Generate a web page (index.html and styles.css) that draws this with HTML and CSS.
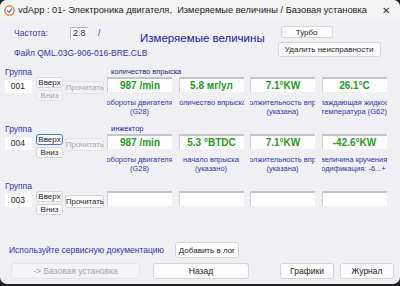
FILE: index.html
```html
<!DOCTYPE html>
<html lang="ru">
<head>
    <meta charset="UTF-8">
    <title>vdApp - Базовая установка</title>
    <link rel="stylesheet" href="styles.css">
</head>
<body>
    <div class="window">
        <div class="titlebar">
            <svg class="app-icon" width="11" height="11" viewBox="0 0 11 11">
                <circle cx="5.5" cy="5.5" r="4.6" fill="#fff" stroke="#e06a2a" stroke-width="1.3"/>
                <path d="M3.2 5.6 L5 7.3 L8 3.6" fill="none" stroke="#3a6fb0" stroke-width="1.3"/>
            </svg>
            <span class="title">vdApp : 01- Электроника двигателя,&nbsp; Измеряемые величины / Базовая установка</span>
            <span class="close">✕</span>
        </div>

        <div class="top">
            <div class="info">
                <div class="freq">
                    <span class="lbl">Частота:</span>
                    <span class="freq-box">2.8</span>
                    <span class="slash">/</span>
                </div>
                <div class="file">Файл QML.03G-906-016-BRE.CLB</div>
            </div>
            <h1>Измеряемые величины</h1>
            <div class="top-btns">
                <button class="btn turbo">Турбо</button>
                <button class="btn">Удалить неисправности</button>
            </div>
        </div>

        <!-- group 001 -->
        <div class="group">
            <div class="group-head">
                <span class="lbl">Группа</span>
                <span class="head">количество впрыска</span>
            </div>
            <div class="group-row">
                <div class="grp-num">001</div>
                <div class="updown">
                    <button class="btn small">Вверх</button>
                    <button class="btn small" disabled>Вниз</button>
                </div>
                <button class="btn read" disabled>Прочитать</button>
                <div class="cells">
                    <div class="cell">
                        <div class="val">987 /min</div>
                        <div class="cap"><span>обороты двигателя</span></div>
                        <div class="cap"><span>(G28)</span></div>
                    </div>
                    <div class="cell">
                        <div class="val">5.8 мг/ул</div>
                        <div class="cap"><span>количество впрыска</span></div>
                    </div>
                    <div class="cell">
                        <div class="val">7.1°KW</div>
                        <div class="cap"><span>продолжительность впрыска</span></div>
                        <div class="cap"><span>(указана)</span></div>
                    </div>
                    <div class="cell">
                        <div class="val">26.1°C</div>
                        <div class="cap"><span>охлаждающая жидкость</span></div>
                        <div class="cap"><span>температура (G62)</span></div>
                    </div>
                </div>
            </div>
        </div>

        <!-- group 004 -->
        <div class="group">
            <div class="group-head">
                <span class="lbl">Группа</span>
                <span class="head">инжектор</span>
            </div>
            <div class="group-row">
                <div class="grp-num">004</div>
                <div class="updown">
                    <button class="btn small focus">Вверх</button>
                    <button class="btn small">Вниз</button>
                </div>
                <button class="btn read" disabled>Прочитать</button>
                <div class="cells">
                    <div class="cell">
                        <div class="val">987 /min</div>
                        <div class="cap"><span>обороты двигателя</span></div>
                        <div class="cap"><span>(G28)</span></div>
                    </div>
                    <div class="cell">
                        <div class="val">5.3 °BTDC</div>
                        <div class="cap"><span>начало впрыска</span></div>
                        <div class="cap"><span>(указано)</span></div>
                    </div>
                    <div class="cell">
                        <div class="val">7.1°KW</div>
                        <div class="cap"><span>продолжительность впрыска</span></div>
                        <div class="cap"><span>(указана)</span></div>
                    </div>
                    <div class="cell">
                        <div class="val">-42.6°KW</div>
                        <div class="cap"><span>величина кручения</span></div>
                        <div class="cap"><span>модификация: -6...+ 6</span></div>
                    </div>
                </div>
            </div>
        </div>

        <!-- group 003 -->
        <div class="group">
            <div class="group-head">
                <span class="lbl">Группа</span>
            </div>
            <div class="group-row">
                <div class="grp-num">003</div>
                <div class="updown">
                    <button class="btn small">Вверх</button>
                    <button class="btn small">Вниз</button>
                </div>
                <button class="btn read">Прочитать</button>
                <div class="cells">
                    <div class="cell"><div class="val"></div></div>
                    <div class="cell"><div class="val"></div></div>
                    <div class="cell"><div class="val"></div></div>
                    <div class="cell"><div class="val"></div></div>
                </div>
            </div>
        </div>

        <div class="bottom">
            <div class="doc-row">
                <span class="doc">Используйте сервисную документацию</span>
                <button class="btn log">Добавить в лог</button>
            </div>
            <div class="nav-row">
                <button class="btn basic" disabled>-&gt; Базовая установка</button>
                <button class="btn back">Назад</button>
                <button class="btn graphs">Графики</button>
                <button class="btn journal">Журнал</button>
            </div>
        </div>
    </div>
</body>
</html>
```

FILE: styles.css
```css
body {
    margin: 0;
    background: #1f1f1f;
    font-family: "Liberation Sans", Arial, sans-serif;
    font-size: 8.5px;
}
.window {
    width: 400px;
    height: 284px;
    background: #efeff4;
    border-radius: 7px;
    overflow: hidden;
}
.titlebar {
    height: 20px;
    background: #f3f3f3;
    display: flex;
    align-items: center;
    padding: 0 0 0 4px;
    color: #1c1c1c;
}
.app-icon {
    margin-right: 3px;
}
.title {
    font-size: 9.3px;
    white-space: nowrap;
}
.close {
    margin-left: auto;
    width: 28px;
    text-align: center;
    font-size: 10px;
    color: #333;
}
.top {
    display: flex;
    height: 46px;
}
.info {
    width: 126px;
    padding: 7px 0 0 14px;
    white-space: nowrap;
}
.lbl, .file, .doc {
    color: #3434a8;
}
.freq {
    display: flex;
    align-items: center;
    height: 12px;
}
.freq-box {
    width: 15px;
    margin-left: 22px;
    padding-left: 2px;
    height: 11px;
    line-height: 11px;
    background: #fff;
    border-top: 1px solid #b8b8b8;
    border-left: 1px solid #b8b8b8;
    color: #222;
    font-size: 9px;
}
.slash {
    margin-left: 10px;
    color: #3434a8;
}
.file {
    margin-top: 9px;
}
h1 {
    margin: 12px 0 0 0;
    font-size: 11.5px;
    font-weight: normal;
    color: #1b1b95;
    white-space: nowrap;
}
.top-btns {
    display: flex;
    flex-direction: column;
    align-items: flex-start;
    margin: 6px 0 0 13px;
    gap: 4px;
}
.btn {
    font-family: inherit;
    font-size: 8px;
    color: #1c1c1c;
    background: #fdfdfd;
    border: 1px solid #d4d4d8;
    border-radius: 3px;
    padding: 0;
    height: 15px;
    white-space: nowrap;
}
.btn:disabled {
    color: #a4a4a8;
    background: #f4f4f7;
    border-color: #e4e4e8;
}
.turbo {
    width: 52px;
    height: 12px;
    margin-left: 3px;
}
.top-btns .btn:last-child {
    width: 103px;
}
.group {
    padding-left: 5px;
    height: 57px;
}
.group-head {
    display: flex;
    height: 11px;
    align-items: center;
}
.head {
    margin-left: 79px;
    font-size: 7.5px;
    color: #22228a;
}
.group-row {
    display: flex;
    align-items: flex-start;
}
.grp-num {
    width: 20px;
    height: 13px;
    line-height: 13px;
    margin-top: 3px;
    padding-right: 7px;
    text-align: right;
    background: #fff;
    color: #1c1c1c;
    font-size: 8.5px;
}
.updown {
    display: flex;
    flex-direction: column;
    gap: 2px;
    margin-left: 4px;
}
.btn.small {
    width: 27px;
    height: 11px;
    font-size: 8px;
}
.btn.focus {
    border-color: #3a78d0;
}
.btn.read {
    width: 39px;
    height: 13px;
    margin: 4px 0 0 2px;
    font-size: 7.8px;
}
.cells {
    display: flex;
    gap: 6.5px;
    margin-left: 3px;
}
.cell {
    width: 65px;
}
.val {
    height: 13px;
    line-height: 13px;
    background: #fff;
    border-top: 2px solid #c4c4c8;
    border-left: 1px solid #d0d0d4;
    text-align: center;
    font-weight: bold;
    font-size: 10px;
    color: #239a23;
}
.cap {
    display: flex;
    justify-content: center;
    overflow: hidden;
    white-space: nowrap;
    height: 9px;
    line-height: 9px;
    font-size: 7.5px;
    color: #3434a8;
}
.val + .cap {
    margin-top: 6px;
}
.bottom {
    margin-top: 5px;
}
.doc-row {
    display: flex;
    align-items: center;
    padding-left: 9px;
}
.btn.log {
    width: 64px;
    height: 16px;
    margin-left: 11px;
}
.nav-row {
    display: flex;
    margin-top: 5px;
    padding-left: 11px;
}
.nav-row .btn {
    height: 16px;
    font-size: 8.5px;
}
.basic { width: 129px; }
.back { width: 96px; margin-left: 13px; }
.graphs { width: 54px; margin-left: 31px; }
.journal { width: 54px; margin-left: 6px; }
```
